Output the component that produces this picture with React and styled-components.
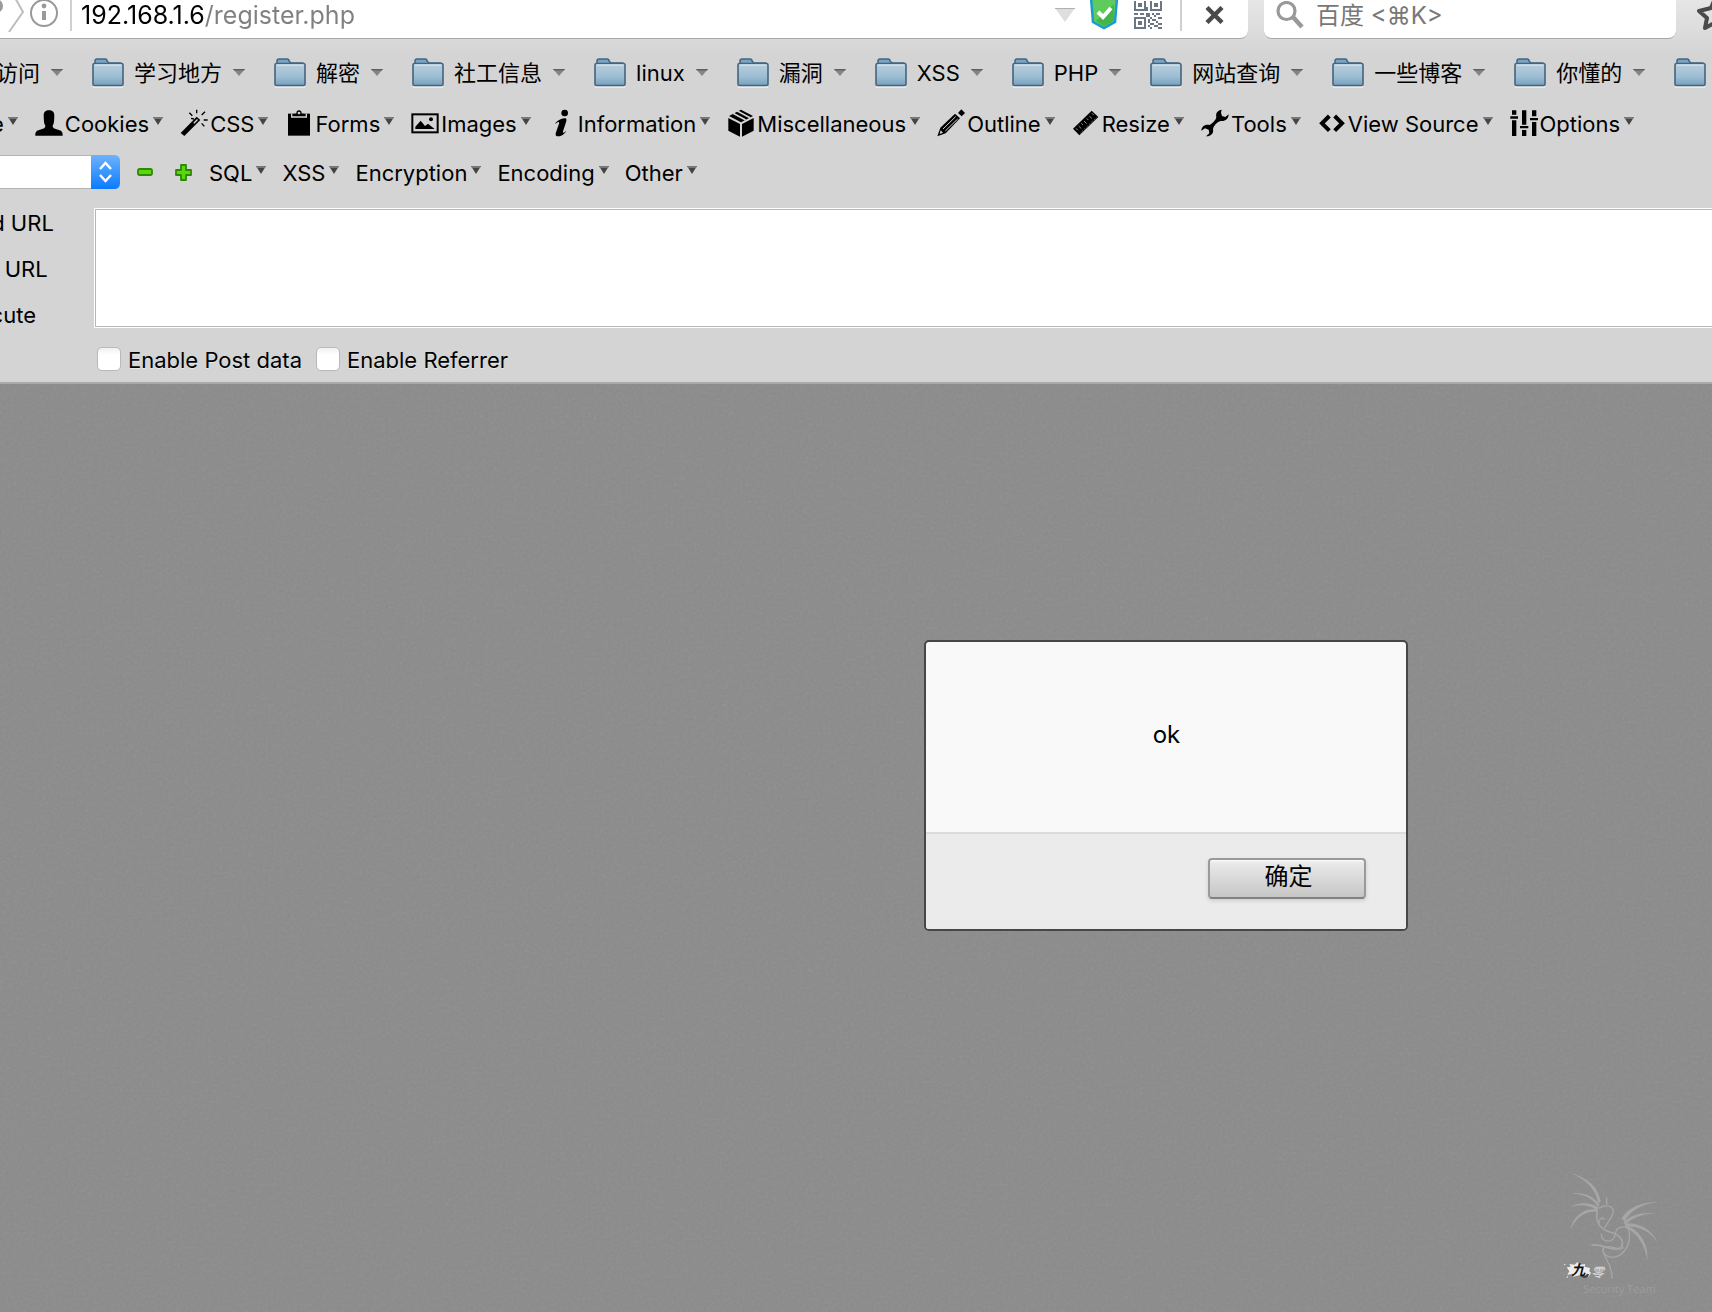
import React from "react";
import styled, { createGlobalStyle } from "styled-components";

const GlobalStyle = createGlobalStyle`
  * {
    box-sizing: border-box;
  }

  body {
    margin: 0;
    overflow-x: hidden;
    font-family: Inter, "Noto Sans CJK SC", sans-serif;
    color: #000;
  }

  button,
  input,
  select,
  textarea {
    font: inherit;
    color: inherit;
    margin: 0;
    padding: 0;
    border: 0;
    background: none;
  }
`;

const Page = styled.div`
  display: flex;
  flex-direction: column;
  min-height: 100vh;
  overflow: hidden;
`;

const Chrome = styled.header`
  background: linear-gradient(#e6e6e6 0, #d4d4d4 56px);
  border-bottom: 2px solid #a9a9a9;
  font-size: 22px;
  line-height: 26px;
  text-shadow: 0 1px 0 rgba(255, 255, 255, 0.5);
`;

const NavBar = styled.div`
  display: flex;
  gap: 16px;
  height: 39px;
  text-shadow: none;
`;

const Field = styled.div`
  display: flex;
  align-items: center;
  background: white;
  border-bottom: 1px solid #a6a6a6;
  border-radius: ${p => p.$radius};
  padding-bottom: 8px;
  font-size: 24px;

  svg {
    flex: none;
    display: block;
  }
`;

const AddressField = styled(Field)`
  flex: 1;
`;

const SearchField = styled(Field)`
  width: 412px;
  padding-left: 12px;
  gap: 12px;
`;

const AddressInput = styled.input`
  flex: 1;
  min-width: 0;
  height: 30px;
  margin-left: 9px;
  outline: none;
  font-size: 25px;
  color: transparent;
  background: linear-gradient(90deg, #000 123px, #808080 123px);
  background-clip: text;
`;

const SearchInput = styled.input`
  flex: 1;
  min-width: 0;
  height: 30px;
  outline: none;

  &::placeholder {
    color: #777;
    opacity: 1;
  }
`;

const FieldButton = styled.button`
  display: flex;
  margin-left: ${p => p.$gap}px;
`;

const Separator = styled.span`
  flex: none;
  width: 2px;
  height: 32px;
  margin-left: ${p => p.$gap}px;
  background: #d0d0d0;
`;

const StarButton = styled.button`
  width: 20px;
  overflow: hidden;
  display: flex;

  svg {
    flex: none;
  }
`;

const BookmarksBar = styled.nav`
  display: flex;
  align-items: center;
  gap: 29px;
  height: 67px;
  margin-left: -4px;
`;

const Bookmark = styled.button`
  flex: none;
  display: flex;
  align-items: center;
  white-space: nowrap;

  span {
    margin: 0 11px 0 10px;
  }

  &:first-child span {
    margin-left: 0;
  }
`;

const MenuBar = styled.nav`
  display: flex;
  align-items: center;
  gap: ${p => p.$gap}px;
  margin-left: ${p => p.$start}px;
`;

const Menu = styled.button`
  flex: none;
  display: flex;
  align-items: center;
  height: 34px;
  white-space: nowrap;

  span {
    margin: 0 4px 0 2px;
    padding-top: 1px;
  }
`;

const MenuArrow = styled.svg`
  margin-bottom: 4px;
`;

const HackRow = styled.div`
  display: flex;
  align-items: center;
  height: 64px;
`;

const SelectBox = styled.div`
  position: relative;
  width: 120px;
  height: 34px;

  select {
    width: 100%;
    height: 100%;
    appearance: none;
    border: 1px solid #b4b4b4;
    border-left: 0;
    border-radius: 0 6px 6px 0;
    background: white;
  }

  svg {
    position: absolute;
    top: 0;
    right: 0;
    pointer-events: none;
  }
`;

const IconButton = styled.button`
  display: flex;
  margin-left: 17px;

  & + & {
    margin-left: 22px;
  }
`;

const HackPanel = styled.div`
  display: flex;
`;

const Actions = styled.div`
  display: flex;
  flex-direction: column;
  align-items: flex-start;
  width: 142px;
  margin: -4px 0 0 -47px;

  button {
    height: 46px;
    white-space: nowrap;
  }
`;

const Fields = styled.div`
  flex: 1;
  padding-top: 5px;
`;

const UrlArea = styled.textarea`
  display: block;
  width: calc(100% + 4px);
  height: 118px;
  border: 1px solid #b5b5b5;
  box-shadow: 0 0 0 1px white;
  background: white;
  resize: none;
  outline: none;
`;

const Checks = styled.div`
  display: flex;
  align-items: center;
  gap: 14px;
  height: 54px;
  padding: 10px 0 0 2px;
  margin-bottom: 1px;
`;

const Check = styled.label`
  display: flex;
  align-items: center;
  gap: 7px;
  white-space: nowrap;

  input {
    appearance: none;
    width: 24px;
    height: 24px;
    border: 1px solid #b9b9b9;
    border-radius: 5px;
    background: linear-gradient(#f1f1f1, #fff 7px);
  }

  span {
    padding-top: 2px;
  }
`;

const Content = styled.main`
  position: relative;
  flex: 1;
  padding: 256px 0 256px 54%;
  background: #8b8b8b;
`;

const Grain = styled.svg`
  position: absolute;
  inset: 0;
  width: 100%;
  height: 100%;
  opacity: 0.1;
`;

const Dialog = styled.section`
  position: relative;
  width: 484px;
  border: 2px solid #474747;
  border-radius: 5px;
  background: #f9f9f9;
  overflow: hidden;
  font-size: 24px;
`;

const Message = styled.p`
  margin: 0;
  height: 190px;
  line-height: 186px;
  text-align: center;
`;

const DialogFooter = styled.footer`
  display: flex;
  justify-content: flex-end;
  padding: 24px 40px 30px;
  border-top: 2px solid #dcdcdc;
  background: #ebebeb;
`;

const OkButton = styled.button`
  width: 158px;
  height: 41px;
  padding: 0 0 4px 2px;
  border: 2px solid #9a9a9a;
  border-bottom-color: #818181;
  border-radius: 4px;
  background: linear-gradient(#fbfbfb 0, #e9e9e9 3px, #c6c6c6 100%);
  box-shadow: 0 2px 4px rgba(0, 0, 0, 0.12);
  line-height: 32px;
`;

const Watermark = styled.svg`
  position: absolute;
  right: 0;
  bottom: 0;
`;

const FolderIcon = () => (
  <svg width="32" height="30" viewBox="0 0 32 30">
    <defs>
      <linearGradient id="folder" x1="0" y1="0" x2="0" y2="1">
        <stop offset="0" stopColor="#b9cfde" />
        <stop offset="0.6" stopColor="#9dbdd3" />
        <stop offset="1" stopColor="#77a0bf" />
      </linearGradient>
    </defs>
    <path d="M1 29h30" stroke="#fff" strokeOpacity="0.5" strokeWidth="2" />
    <path d="M3 8V3q0-2 2-2h8q2 0 2 2l2 2h11q2 0 2 2v2z" fill="#7ba3c3" stroke="#44647f" strokeWidth="1.5" />
    <rect x="1" y="5.5" width="30" height="22" rx="1.5" fill="url(#folder)" stroke="#44647f" strokeWidth="1.6" />
    <path d="M2.5 7h27" stroke="#dce8f0" strokeWidth="1.2" />
  </svg>
);

const BookmarkArrow = () => (
  <svg width="12" height="7" viewBox="0 0 12 7">
    <path d="M0 0h12L6 7z" fill="#858585" />
    <path d="M0 0h12l-1 1.5H1z" fill="#606060" />
  </svg>
);

const DownArrow = () => (
  <MenuArrow width="10" height="8" viewBox="0 0 10 8">
    <path d="M0 0h10L5 8z" fill="#444" />
    <path d="M0 0h10L9 2H1z" fill="#777" />
  </MenuArrow>
);

// toolbar glyphs share one 84 unit grid
const glyphs = {
  user: (
    <path d="M1 80C1 68 4 65 14 62C24 59 31 58 31 50C26 43 27 34 26 20C26 8 32 4 42 4S58 8 58 20C57 34 58 43 53 50C53 58 60 59 70 62C80 65 83 68 83 80Z" />
  ),
  wand: (
    <>
      <path d="M2 72L50 23L61 33L13 81Z" />
      <path d="M40 41L51 30L54 33L43 44Z" fill="#d4d4d4" />
      <path
        d="M50 2V13M28 11L37 20M75 8L65 18M71 33H83M65 43L73 52M33 28L42 30"
        fill="none"
        stroke="#000"
        strokeWidth="4"
      />
    </>
  ),
  clipboard: (
    <>
      <path d="M9 14H75V80H9Z" />
      <path d="M20 14V24H64V14" fill="none" stroke="#d4d4d4" strokeWidth="4" />
      <path d="M27 20V14H34Q34 4 42 4T50 14H57V20Z" />
      <circle cx="42" cy="12" r="4" fill="#d4d4d4" />
    </>
  ),
  image: (
    <>
      <rect x="4" y="16" width="76" height="54" fill="none" stroke="#000" strokeWidth="6" />
      <path d="M13 60V53L29 35L42 51L51 44L71 60Z" />
      <circle cx="60" cy="31" r="6" />
    </>
  ),
  info: (
    <>
      <circle cx="50" cy="12" r="10" />
      <path d="M22 42C32 32 44 28 50 28C57 28 56 34 54 40L45 67C44 73 48 72 55 65C48 78 37 82 30 82C22 82 22 76 24 70L33 44C35 37 30 38 23 44Z" />
    </>
  ),
  box: (
    <>
      <path d="M4 27L39 45V83L4 65Z" />
      <path d="M80 27L45 45V83L80 65Z" />
      <path d="M42 2L78 21L42 40L6 21Z" />
      <path d="M18 13L56 33M31 6L69 26" stroke="#d4d4d4" strokeWidth="5" />
    </>
  ),
  pencil: (
    <>
      <path d="M1 82L10 56L54 14L69 28L26 73Z" />
      <path d="M18 60L56 23M25 66L62 30" stroke="#d4d4d4" strokeWidth="3" />
      <path d="M11 64L18 71L8 75Z" fill="#d4d4d4" />
      <path d="M73 1L84 12L74 22L63 12Z" />
    </>
  ),
  ruler: (
    <>
      <path d="M3 59L59 5L79 24L22 79Z" />
      <path
        d="M12 58L17 63M20 51L28 59M28 43L33 48M36 36L44 44M44 28L49 33M52 21L60 29M60 13L65 18"
        stroke="#d4d4d4"
        strokeWidth="2"
      />
      <path d="M26 71L73 26" stroke="#d4d4d4" strokeWidth="2" strokeDasharray="3 4" />
    </>
  ),
  wrench: (
    <path d="M62 2C51 3 43 12 46 24C45 33 33 45 25 48C12 45 2 52 1 65L12 58L23 62L25 73L15 82C29 83 39 73 36 60C38 50 49 38 59 36C72 38 83 30 83 16L73 24L63 21L60 11Z" />
  ),
  code: (
    <path d="M34 21L12 43L34 65M50 21L72 43L50 65" fill="none" stroke="#000" strokeWidth="12" />
  ),
  sliders: (
    <path d="M6 4H19V17H6ZM1 22H24V29H1ZM6 34H19V81H6ZM36 4H49V47H36ZM30 51H55V58H30ZM36 63H49V81H36ZM66 4H79V22H66ZM60 27H84V34H60ZM66 39H79V81H66Z" />
  )
};

const Glyph = ({ name }) => (
  <svg width="28" height="28" viewBox="0 0 84 84">
    {glyphs[name]}
  </svg>
);

const QrIcon = () => (
  <svg width="28" height="28" viewBox="0 0 14 14" fill="#6d7683" shapeRendering="crispEdges">
    <path
      fillRule="evenodd"
      d="M0-1H6V5H0ZM1 0V4H5V0ZM8-1H14V5H8ZM9 0V4H13V0ZM0 8H6V14H0ZM1 9V13H5V9Z"
    />
    <path d="M2 1H4V3H2ZM10 1H12V3H10ZM2 10H4V12H2Z" />
    <path d="M6 3H7V5H6ZM0 6H2V7H0ZM3 6H5V7H3ZM6 6H8V8H6ZM9 6H10V7H9ZM11 6H13V7H11ZM8 8H9V9H8ZM10 7H11V8H10ZM12 8H14V9H12ZM7 9H8V11H7ZM9 9H11V10H9ZM11 10H12V11H11ZM8 11H10V12H8ZM12 11H14V12H12ZM7 12H8V13H7ZM10 12H12V13H10ZM8 13H9V14H8ZM12 13H14V14H12Z" />
  </svg>
);

const bookmarks = [
  "学习地方",
  "解密",
  "社工信息",
  "linux",
  "漏洞",
  "XSS",
  "PHP",
  "网站查询",
  "一些博客",
  "你懂的"
];

const devMenus = [
  ["user", "Cookies"],
  ["wand", "CSS"],
  ["clipboard", "Forms"],
  ["image", "Images"],
  ["info", "Information"],
  ["box", "Miscellaneous"],
  ["pencil", "Outline"],
  ["ruler", "Resize"],
  ["wrench", "Tools"],
  ["code", "View Source"],
  ["sliders", "Options"]
];

const hackMenus = ["SQL", "XSS", "Encryption", "Encoding", "Other"];

const Navigation = () => (
  <NavBar>
    <AddressField $radius="0 0 8px 0">
      <svg width="60" height="34" viewBox="0 0 60 34" fill="none">
        <circle cx="-4" cy="8" r="7" fill="#9a9a9a" />
        <path d="M14-2L23 14L9 34" stroke="#bdbdbd" strokeWidth="2" />
        <circle cx="44" cy="15" r="13" stroke="#999" strokeWidth="2" />
        <circle cx="44" cy="8" r="2.4" fill="#999" />
        <path d="M44 13V22" stroke="#999" strokeWidth="4" />
      </svg>
      <Separator $gap={10} />
      <AddressInput aria-label="Address" defaultValue="192.168.1.6/register.php" />
      <FieldButton aria-label="History" $gap={12}>
        <svg width="20" height="14" viewBox="0 0 20 14">
          <path d="M0 0H20L10 14Z" fill="#dedede" />
          <path d="M0 0.5H20" stroke="#b0b0b0" />
        </svg>
      </FieldButton>
      <FieldButton aria-label="Site safety" $gap={15}>
        <svg width="28" height="30" viewBox="0 0 28 30">
          <path d="M1-2H27L25 22L14 28L3 22Z" fill="#5fcb5c" stroke="#1a9bd0" strokeWidth="2.5" />
          <path d="M14 26L6 21L24 4V21Z" fill="#46b548" />
          <path d="M8 12L13 17L21 8" fill="none" stroke="#fff" strokeWidth="4" />
        </svg>
      </FieldButton>
      <FieldButton aria-label="QR code" $gap={16}>
        <QrIcon />
      </FieldButton>
      <Separator $gap={18} />
      <FieldButton aria-label="Stop" $gap={23}>
        <svg width="43" height="18" viewBox="0 0 43 18">
          <path d="M2 1.5L17 16.5M17 1.5L2 16.5" stroke="#4a4a4a" strokeWidth="4.4" />
        </svg>
      </FieldButton>
    </AddressField>
    <SearchField $radius="0 0 8px 8px">
      <svg width="28" height="28" viewBox="0 0 28 28" fill="none" stroke="#999">
        <circle cx="10.5" cy="10" r="8.5" strokeWidth="3.2" />
        <path d="M17 16L26 26" strokeWidth="4.5" />
      </svg>
      <SearchInput aria-label="Search" placeholder="百度 <⌘K>" />
    </SearchField>
    <StarButton aria-label="Bookmark this page">
      <svg width="36" height="39" viewBox="-4 0 36 39">
        <path
          d="M20-4L15 8L3 11L11 18L9 28L20 22L31 28L29 18L37 11L25 8Z"
          fill="none"
          stroke="#4a4a4a"
          strokeWidth="4"
          strokeLinejoin="round"
        />
      </svg>
    </StarButton>
  </NavBar>
);

const App = () => (
  <Page>
    <GlobalStyle />
    <Chrome>
      <Navigation />
      <BookmarksBar>
        <Bookmark>
          <span>访问</span>
          <BookmarkArrow />
        </Bookmark>
        {bookmarks.map(name => (
          <Bookmark key={name}>
            <FolderIcon />
            <span>{name}</span>
            <BookmarkArrow />
          </Bookmark>
        ))}
        <Bookmark aria-label="More bookmarks">
          <FolderIcon />
        </Bookmark>
      </BookmarksBar>
      <MenuBar $gap={17} $start={-11}>
        <Menu>
          <span>e</span>
          <DownArrow />
        </Menu>
        {devMenus.map(([icon, name]) => (
          <Menu key={name}>
            <Glyph name={icon} />
            <span>{name}</span>
            <DownArrow />
          </Menu>
        ))}
      </MenuBar>
      <HackRow>
        <SelectBox>
          <select aria-label="Preset">
            <option></option>
          </select>
          <svg width="29" height="34" viewBox="0 0 29 34">
            <defs>
              <linearGradient id="stepper" x1="0" y1="0" x2="0" y2="1">
                <stop offset="0" stopColor="#6db3fb" />
                <stop offset="1" stopColor="#0a7bff" />
              </linearGradient>
            </defs>
            <path d="M0 0H23Q29 0 29 6V28Q29 34 23 34H0Z" fill="url(#stepper)" />
            <path d="M9 14L14.5 8L20 14M9 20L14.5 26L20 20" fill="none" stroke="#fff" strokeWidth="2.5" />
          </svg>
        </SelectBox>
        <IconButton aria-label="Remove">
          <svg width="16" height="8" viewBox="0 0 16 8">
            <rect x="1" y="1" width="14" height="6" rx="1.5" fill="#5bd80c" stroke="#2c8a05" strokeWidth="1.8" />
          </svg>
        </IconButton>
        <IconButton aria-label="Add">
          <svg width="17" height="17" viewBox="0 0 17 17">
            <path
              d="M6 1H11V6H16V11H11V16H6V11H1V6H6Z"
              fill="#5bd80c"
              stroke="#2c8a05"
              strokeWidth="1.8"
              strokeLinejoin="round"
            />
          </svg>
        </IconButton>
        <MenuBar $gap={14} $start={15}>
          {hackMenus.map(name => (
            <Menu key={name}>
              <span>{name}</span>
              <DownArrow />
            </Menu>
          ))}
        </MenuBar>
      </HackRow>
      <HackPanel>
        <Actions>
          <button>Load URL</button>
          <button>Split URL</button>
          <button>Execute</button>
        </Actions>
        <Fields>
          <UrlArea aria-label="URL" />
          <Checks>
            <Check>
              <input type="checkbox" />
              <span>Enable Post data</span>
            </Check>
            <Check>
              <input type="checkbox" />
              <span>Enable Referrer</span>
            </Check>
          </Checks>
        </Fields>
      </HackPanel>
    </Chrome>
    <Content>
      <Grain>
        <filter id="grain">
          <feTurbulence type="fractalNoise" baseFrequency="0.35" numOctaves="2" />
          <feColorMatrix type="saturate" values="0" />
        </filter>
        <rect width="100%" height="100%" filter="url(#grain)" />
      </Grain>
      <Dialog role="dialog" aria-label="ok">
        <Message>ok</Message>
        <DialogFooter>
          <OkButton>确定</OkButton>
        </DialogFooter>
      </Dialog>
      <Watermark width="172" height="162" viewBox="0 0 516 486" fill="none">
        <g fill="#a6a6a6">
          <path d="M92 69C138 82 176 108 182 156L174 160C168 118 138 88 92 69Z" />
          <path d="M95 130C130 126 162 138 180 166L172 168C156 144 130 132 95 130Z" />
          <path d="M90 172C118 154 150 158 176 172L172 180C146 164 118 162 90 172Z" />
          <path d="M91 240C98 200 132 172 174 178L172 186C136 182 108 202 91 240Z" />
          <path d="M354 156C304 156 264 172 244 206L254 214C272 180 306 162 354 156Z" />
          <path d="M344 190C306 186 272 196 250 216L256 224C280 202 308 192 344 190Z" />
          <path d="M352 276C336 240 300 216 254 220L256 230C298 228 328 244 352 276Z" />
          <path d="M322 330C326 284 300 240 258 226L262 236C294 252 314 284 322 330Z" />
        </g>
        <g stroke="#a6a6a6" strokeWidth="4">
          <path d="M200 142V164M176 176C186 164 214 164 220 180C222 200 200 218 194 234" />
          <path d="M172 180C166 210 176 236 210 246C250 256 256 286 236 296C214 304 180 278 154 286" strokeWidth="5" />
          <path d="M194 208C186 200 172 210 178 224M184 250C180 280 226 282 226 250C230 226 264 224 268 246C272 276 256 320 218 322C182 318 180 288 206 290C232 292 246 304 250 290" />
          <path d="M192 292C180 318 218 332 216 386" />
        </g>
        <path
          d="M80 352L92 350L88 342L104 344L112 336L120 344L136 342L134 350L150 354L148 364L154 370L140 374L134 382L118 376L100 380L98 372L82 374L88 364Z"
          fill="#ececec"
        />
        <path d="M72 344L76 343M80 382L84 380M142 380L150 372" stroke="#ddd" strokeWidth="4" />
        <path d="M122 376Q140 386 144 372" stroke="#444" strokeWidth="7" />
        <text x="94" y="376" fontFamily="Noto Sans CJK SC" fontSize="42" fontWeight="700" fontStyle="italic" fill="#111">
          九
        </text>
        <text x="154" y="380" fontFamily="Noto Sans CJK SC" fontSize="38" fontWeight="500" fontStyle="italic" fill="#d8d8d8">
          零
        </text>
        <text x="130" y="428" fontFamily="Open Sans" fontSize="33" fill="#9c9c9c">
          Security Team
        </text>
      </Watermark>
    </Content>
  </Page>
);

export default App;
